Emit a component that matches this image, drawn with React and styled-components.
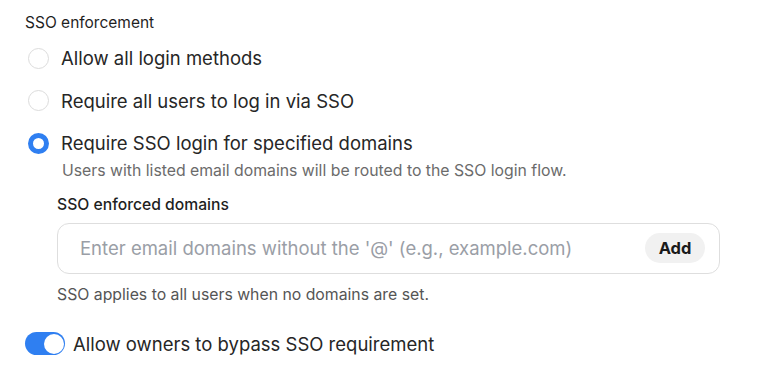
import React, { useState } from 'react';
import styled, { createGlobalStyle } from 'styled-components';

const Global = createGlobalStyle`
  body {
    margin: 0;
    background: #fff;
    font-family: Inter, "Noto Sans", sans-serif;
    color: #1f1f1f;
  }
`;

const Page = styled.div`
  padding: 13px 0 0 25px;
  width: 695px;
`;

const Heading = styled.div`
  font-size: 15.5px;
  line-height: 20px;
  font-weight: 400;
  color: #1f1f1f;
`;

const Options = styled.div`
  display: flex;
  flex-direction: column;
  margin-top: 4px;
`;

const OptionRow = styled.label`
  display: flex;
  align-items: center;
  gap: 12px;
  height: 42.5px;
  padding-left: 3px;
  cursor: pointer;
`;

const Radio = styled.span`
  box-sizing: border-box;
  width: 21px;
  height: 21px;
  border-radius: 50%;
  flex: none;
  border: ${p => (p.$on ? '5px solid #2f7ff1' : '1.5px solid #dcdcdc')};
  background: #fff;
`;

const OptionText = styled.span`
  font-size: 18.5px;
  line-height: 24px;
  color: #262626;
`;

const Detail = styled.div`
  padding-left: 37px;
  margin-top: -4px;
`;

const Hint = styled.div`
  font-size: 15.8px;
  color: #6b6b6b;
  line-height: 20px;
`;

const FieldLabel = styled.div`
  font-size: 15.7px;
  font-weight: 500;
  line-height: 20px;
  margin: 14px 0 0 -5px;
`;

const Field = styled.div`
  box-sizing: border-box;
  display: flex;
  align-items: center;
  margin: 8px 0 0 -5px;
  width: 663px;
  height: 51px;
  border: 1px solid #dedede;
  border-radius: 12px;
  padding: 0 14px 0 20px;
`;

const Input = styled.input`
  flex: 1;
  min-width: 0;
  border: none;
  outline: none;
  font-family: inherit;
  font-size: 18.5px;
  color: #222;
  background: transparent;
  &::placeholder { color: #9a9ea6; }
`;

const AddButton = styled.button`
  height: 30px;
  width: 60px;
  border: none;
  border-radius: 15px;
  background: #f1f1f1;
  font-family: inherit;
  font-weight: 700;
  font-size: 16.5px;
  color: #1a1a1a;
`;

const Note = styled.div`
  margin: 11px 0 0 -5px;
  font-size: 15.8px;
  line-height: 20px;
  color: #555;
`;

const ToggleRow = styled.label`
  display: flex;
  align-items: center;
  gap: 8px;
  margin-top: 27px;
`;

const Track = styled.span`
  box-sizing: border-box;
  width: 40px;
  height: 23px;
  border-radius: 12px;
  background: ${p => (p.$on ? '#2f7ff1' : '#ccc')};
  display: flex;
  align-items: center;
  justify-content: ${p => (p.$on ? 'flex-end' : 'flex-start')};
  padding: 1.5px;
`;

const Knob = styled.span`
  width: 20px;
  height: 20px;
  border-radius: 50%;
  background: #fff;
`;

const ToggleText = styled.span`
  font-size: 18.5px;
  line-height: 24px;
  color: #262626;
`;

const options = [
  'Allow all login methods',
  'Require all users to log in via SSO',
  'Require SSO login for specified domains',
];

export default function App() {
  const [sel, setSel] = useState(2);
  const [bypass, setBypass] = useState(true);
  return (
    <Page>
      <Global />
      <Heading>SSO enforcement</Heading>
      <Options>
        {options.map((o, i) => (
          <OptionRow key={o} onClick={() => setSel(i)}>
            <Radio $on={sel === i} />
            <OptionText>{o}</OptionText>
          </OptionRow>
        ))}
      </Options>
      <Detail>
        <Hint>Users with listed email domains will be routed to the SSO login flow.</Hint>
        <FieldLabel>SSO enforced domains</FieldLabel>
        <Field>
          <Input placeholder="Enter email domains without the '@' (e.g., example.com)" />
          <AddButton>Add</AddButton>
        </Field>
        <Note>SSO applies to all users when no domains are set.</Note>
      </Detail>
      <ToggleRow onClick={() => setBypass(!bypass)}>
        <Track $on={bypass}><Knob /></Track>
        <ToggleText>Allow owners to bypass SSO requirement</ToggleText>
      </ToggleRow>
    </Page>
  );
}
